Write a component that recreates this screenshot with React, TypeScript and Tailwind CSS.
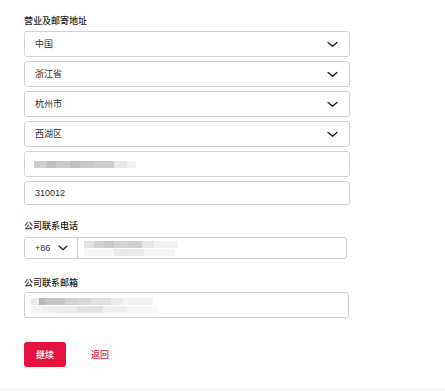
import React from "react";

const Chevron = ({ w = 11 }: { w?: number }) => (
  <svg width={w} height={Math.round(w * 0.6)} viewBox="0 0 12 7" fill="none">
    <path d="M1.2 1.2l4.8 4.3l4.8-4.3" stroke="#222" strokeWidth="1.5" strokeLinecap="round" strokeLinejoin="round" />
  </svg>
);

const Select = ({ value }: { value: string }) => (
  <div className="mt-[4px] flex h-[26px] w-[326px] items-center justify-between rounded-[3px] border border-[#d2d2d2] bg-white pl-[10px] pr-[11px]">
    <span className="text-[9px] leading-[12px] text-[#333]">{value}</span>
    <Chevron />
  </div>
);

const Blur = ({ segs }: { segs: [number, string][] }) => (
  <div className="flex h-[7px] blur-[0.5px]">
    {segs.map(([w, c], i) => (
      <div key={i} style={{ width: w, backgroundColor: c }} />
    ))}
  </div>
);

export default function App() {
  return (
    <div
      className="h-[391px] w-[445px] bg-white pl-[24px] pt-[15px] text-[#222]"
      style={{ fontFamily: '"Liberation Sans", "Noto Sans CJK SC", sans-serif' }}
    >
      <div className="h-[12px] text-[9px] font-medium leading-[12px]">营业及邮寄地址</div>
      <div className="mt-[1px]">
        <Select value="中国" />
        <Select value="浙江省" />
        <Select value="杭州市" />
        <Select value="西湖区" />
      </div>
      <div className="mt-[4px] flex h-[26px] w-[326px] items-center rounded-[3px] border border-[#d2d2d2] pl-[9px]">
        <Blur
          segs={[
            [12, "#cfcfcf"],
            [10, "#c2c2c2"],
            [14, "#cbcbcb"],
            [10, "#c0c0c0"],
            [14, "#c8c8c8"],
            [20, "#cdcdcd"],
            [12, "#e8e8e8"],
            [10, "#f3f3f3"],
          ]}
        />
      </div>
      <div className="mt-[4px] flex h-[24px] w-[326px] items-center rounded-[3px] border border-[#d2d2d2] pl-[10px]">
        <span className="text-[9px] leading-[12px] text-[#333]">310012</span>
      </div>

      <div className="mt-[15px] h-[12px] text-[9px] font-medium leading-[12px]">公司联系电话</div>
      <div className="mt-[5px] flex h-[22px] w-[323px] items-center rounded-[3px] border border-[#d2d2d2]">
        <div className="flex h-full w-[53px] items-center gap-[8px] border-r border-[#d2d2d2] pl-[10px]">
          <span className="text-[9px] leading-[12px] text-[#333]">+86</span>
          <Chevron w={10} />
        </div>
        <div className="flex flex-col gap-[1px] pl-[6px]">
          <Blur
            segs={[
              [10, "#e2e2e2"],
              [10, "#d2d2d2"],
              [10, "#c9c9c9"],
              [14, "#d4d4d4"],
              [14, "#d0d0d0"],
              [12, "#e6e6e6"],
              [24, "#f2f2f2"],
            ]}
          />
          <Blur
            segs={[
              [30, "#f8f8f8"],
              [14, "#eaeaea"],
              [16, "#ececec"],
              [30, "#f5f5f5"],
            ]}
          />
        </div>
      </div>

      <div className="mt-[18px] h-[12px] text-[9px] font-medium leading-[12px]">公司联系邮箱</div>
      <div className="mt-[3px] flex h-[26px] w-[325px] flex-col justify-center gap-[1px] rounded-[3px] border border-[#d2d2d2] pl-[6px]">
        <Blur
          segs={[
            [8, "#ebebeb"],
            [6, "#b8b8b8"],
            [20, "#c5c5c5"],
            [14, "#d2d2d2"],
            [12, "#d8d8d8"],
            [20, "#e0e0e0"],
            [12, "#ececec"],
            [30, "#f4f4f4"],
          ]}
        />
        <Blur
          segs={[
            [10, "#f4f4f4"],
            [16, "#eeeeee"],
            [20, "#eaeaea"],
            [26, "#e2e2e2"],
            [24, "#f0f0f0"],
            [30, "#f8f8f8"],
          ]}
        />
      </div>

      <div className="mt-[24px] flex items-center">
        <button className="flex h-[25px] w-[42px] items-center justify-center rounded-[3px] bg-[#e5123d] text-[9px] font-medium leading-[12px] text-white">
          继续
        </button>
        <span className="ml-[25px] text-[9px] font-medium leading-[12px] text-[#e5123d]">返回</span>
      </div>
      <div className="-ml-[24px] mt-[22px] w-[445px] border-t border-[#f0f0f0]" />
    </div>
  );
}
